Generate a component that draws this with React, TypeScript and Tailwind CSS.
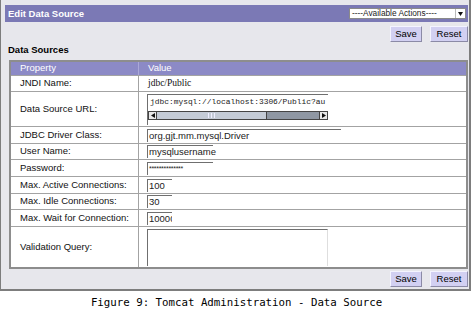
import React from "react";

const sans = "font-['Liberation_Sans',Arial,sans-serif]";

function Btn({ label, w }: { label: string; w: string }) {
  return (
    <div
      className={`${w} h-[16px] flex items-center justify-center bg-[#d2d0f2] border border-t-[#f4f4ff] border-l-[#f4f4ff] border-r-[#8b8aa6] border-b-[#8b8aa6] text-[9.5px] text-black leading-none`}
    >
      {label}
    </div>
  );
}

function Row({ label, h, children }: { label: string; h: string; children?: React.ReactNode }) {
  return (
    <div className={`flex ${h} border-t border-[#a3a3a3]`}>
      <div className="w-[128px] shrink-0 border-r border-[#a3a3a3] pl-[9px] flex items-center text-[9.5px] text-[#111]">
        {label}
      </div>
      <div className="flex-1 pl-[8px] flex items-center">{children}</div>
    </div>
  );
}

function Field({ value, w, small }: { value: string; w: string; small?: boolean }) {
  return (
    <div
      className={`${w} h-[13px] border-t border-l border-[#6f6f6f] pl-[1px] flex items-center ${small ? "text-[7px] tracking-[-0.3px]" : "text-[9.5px]"} text-[#222] leading-none`}
    >
      {value}
    </div>
  );
}

function Scrollbar() {
  return (
    <div className="flex h-[9px] w-[180px] border border-[#444]">
      <div className="w-[8px] bg-[#e8e8e8] border-r border-[#444] flex items-center justify-center">
        <svg width="4" height="5" viewBox="0 0 4 5"><path d="M4 0 L0 2.5 L4 5 Z" fill="#111" /></svg>
      </div>
      <div className="w-[109px] bg-[#c4cbd6] flex items-center justify-center gap-[2px]">
        <div className="w-px h-[5px] bg-[#eef]" />
        <div className="w-px h-[5px] bg-[#eef]" />
        <div className="w-px h-[5px] bg-[#eef]" />
      </div>
      <div className="flex-1 bg-[#8f97a3] border-l border-[#444]" />
      <div className="w-[8px] bg-[#e8e8e8] border-l border-[#444] flex items-center justify-center">
        <svg width="4" height="5" viewBox="0 0 4 5"><path d="M0 0 L4 2.5 L0 5 Z" fill="#111" /></svg>
      </div>
    </div>
  );
}

export default function App() {
  return (
    <div className={`w-[473px] h-[311px] bg-white overflow-hidden ${sans}`}>
      <div className="w-[471px] h-[291px] bg-[#e7e7ec] border-l border-r-2 border-b-2 border-[#7d7d7d] pt-[5px] pl-[4px] pr-[1px] flex flex-col">
        {/* title bar */}
        <div className="h-[17px] bg-[#7b79b5] flex items-center justify-between pl-[3px] pr-[2px]">
          <span className="text-[9.5px] font-bold text-white leading-none">Edit Data Source</span>
          <div className="w-[117px] h-[11px] bg-white border border-[#8a8a8a] flex items-center justify-between pl-[2px]">
            <span className="text-[8.3px] text-[#222] leading-none">----Available Actions----</span>
            <div className="w-[10px] h-[9px] flex items-center justify-center border-l border-[#bbb]">
              <svg width="5" height="4" viewBox="0 0 5 4"><path d="M0 0 L5 0 L2.5 4 Z" fill="#111" /></svg>
            </div>
          </div>
        </div>

        <div className="flex justify-end gap-[8px] mt-[4px]">
          <Btn label="Save" w="w-[32px]" />
          <Btn label="Reset" w="w-[38px]" />
        </div>

        <div className="mt-[2px] pl-[3px] h-[12px] leading-[12px] text-[9.5px] font-bold text-black">Data Sources</div>

        {/* table */}
        <div className="mt-[4px] ml-[4px] border-2 border-[#8d8d8d] bg-white flex flex-col">
          <div className="flex h-[13px] bg-[#8c8ac6] text-[9.5px] text-white">
            <div className="w-[128px] border-r border-[#aaa8d8] pl-[9px] flex items-center">Property</div>
            <div className="flex-1 pl-[9px] flex items-center">Value</div>
          </div>
          <Row label="JNDI Name:" h="h-[16px]">
            <span className="font-['Liberation_Serif',serif] text-[9.5px] text-[#111] pl-[1px]">jdbc/Public</span>
          </Row>
          <Row label="Data Source URL:" h="h-[35px]">
            <div className="w-[181px] h-[31px] border-t border-l border-[#6f6f6f] flex flex-col pt-[2px] pl-[2px]">
              <span className="font-['Liberation_Mono',monospace] text-[7.9px] leading-[9px] text-[#222] whitespace-nowrap">
                jdbc:mysql://localhost:3306/Public?au
              </span>
              <div className="mt-[5px] -ml-[2px]">
                <Scrollbar />
              </div>
            </div>
          </Row>
          <Row label="JDBC Driver Class:" h="h-[17px]">
            <Field value="org.gjt.mm.mysql.Driver" w="w-[194px]" />
          </Row>
          <Row label="User Name:" h="h-[16px]">
            <Field value="mysqlusername" w="w-[66px]" />
          </Row>
          <Row label="Password:" h="h-[17px]">
            <Field value="**************" w="w-[66px]" small />
          </Row>
          <Row label="Max. Active Connections:" h="h-[17px]">
            <Field value="100" w="w-[25px]" />
          </Row>
          <Row label="Max. Idle Connections:" h="h-[16px]">
            <Field value="30" w="w-[25px]" />
          </Row>
          <Row label="Max. Wait for Connection:" h="h-[17px]">
            <Field value="10000" w="w-[25px] overflow-hidden whitespace-nowrap" />
          </Row>
          <Row label="Validation Query:" h="h-[41px]">
            <div className="w-[181px] h-[37px] mt-[2px] self-start border-t border-l border-[#6f6f6f] border-r border-r-[#dedede]" />
          </Row>
        </div>

        <div className="flex justify-end gap-[8px] mt-[2px]">
          <Btn label="Save" w="w-[32px]" />
          <Btn label="Reset" w="w-[38px]" />
        </div>
      </div>

      <div className="h-[20px] pt-[3px] leading-[17px] text-center font-['DejaVu_Sans_Mono',monospace] text-[10.75px] text-black whitespace-nowrap">
        Figure 9: Tomcat Administration - Data Source
      </div>
    </div>
  );
}
